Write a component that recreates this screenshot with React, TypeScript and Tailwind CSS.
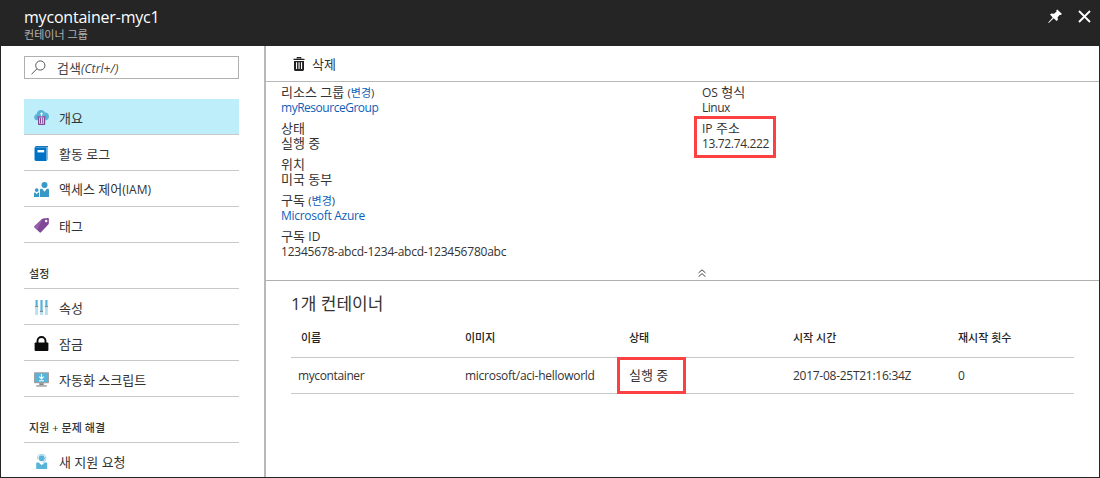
import type { ReactNode } from "react";

const CloudBinIcon = () => (
  <svg width="15" height="15" viewBox="0 0 15 15">
    <path d="M3.2 10.2A3 3 0 0 1 .2 7.2c0-1.500 1-2.600 2.400-2.900C2.900 1.900 4.600.1 6.900.1c1.900 0 3.300 1 3.900 2.500 2.300-.2 4.200 1.500 4.200 3.800 0 2.200-1.500 3.800-3.600 3.800z" fill="#59b4d9" />
    <path d="M4 6.200h7.200v7.600c0 .7-.5 1.200-1.200 1.200H5.200C4.500 15 4 14.500 4 13.800z" fill="#e6dcec" />
    <path d="M3.500 7.400V6.300h8.200v1.100zM4 7.400h1.200v6.400H10V7.400h1.200V14c0 .6-.4 1-1 1H5c-.6 0-1-.4-1-1zM6 8h1v5.200H6zM8.200 8h1v5.200h-1z" fill="#804998" />
    <path d="M7.600 2.200 9.400 4.200H8.100v2H7.100v-2H5.800z" fill="#fff" />
  </svg>
);

const BookIcon = () => (
  <svg width="15" height="15" viewBox="0 0 15 15">
    <path d="M2.600 0H14v13.600l-1.400 1V1.800H.8z" fill="#59a4d6" />
    <path d="M.9 1.300C1.200.5 1.800 0 2.600 0H14v.7H3c-.8 0-1.200.4-1.300.9z" fill="#0064b0" />
    <path d="M.5 1.600h12.100V15H2C1 15 .5 14.500.5 13.600z" fill="#0072c6" />
    <path d="M3.500 4h6.700v2.400H3.500z" fill="#fff" />
    <path d="M13.200 1v13" stroke="#d5e8f4" strokeWidth=".5" />
  </svg>
);

const PeopleIcon = () => (
  <svg width="15" height="15" viewBox="0 0 15 15" fill="#3999c6">
    <circle cx="10.500" cy="3" r="3" />
    <circle cx="2.700" cy="8.100" r="1.900" />
    <path d="M6 15V8.200c0-.9.500-1.400 1.300-1.400h.9l2.300 2.900 2.300-2.900h.9c.8 0 1.300.5 1.300 1.400V15zM0 15v-3.300c0-.7.400-1.100 1-1.100h.4l1.300 1.700L4 10.600h1.200V15z" />
  </svg>
);

const TagIcon = () => (
  <svg width="15" height="15" viewBox="0 0 15 15">
    <path fillRule="evenodd" d="M9.100.4 13.900.1c.6 0 1 .4 1 1l-.1 4.300c0 .4-.2.800-.5 1.100L7 14.300c-.5.5-1 .5-1.500 0L.5 9.500c-.5-.5-.5-1 0-1.500L8 .9c.3-.3.7-.5 1.100-.5zm3.100 1.400a1.200 1.200 0 1 0 0 2.400 1.200 1.200 0 0 0 0-2.400z" fill="#804998" />
    <path d="M8.600.5.500 8c-.5.5-.5 1 0 1.500L3.200 12z" fill="#a573b8" opacity=".55" />
  </svg>
);

const SlidersIcon = () => (
  <svg width="15" height="15" viewBox="0 0 15 15">
    <path d="M1.200 6h2.800v9H1.200zM6.100 10h2.800v5H6.100zM11 6h2.800v9H11z" fill="#b7dff0" />
    <path d="M1.500 0h2.200v6H1.500zM6.400 0h2.200v11H6.400zM11.300 0h2.200v6h-2.200z" fill="#59b4d9" />
    <path d="M1 6h3.200v1H1zM5.900 11h3.200v1H5.900zM10.800 6H14v1h-3.200z" fill="#858c90" />
  </svg>
);

const LockIcon = () => (
  <svg width="15" height="15" viewBox="0 0 15 15">
    <path d="M3.500 7V5a4 4 0 0 1 8 0v2" fill="none" stroke="#0a0a0a" strokeWidth="1.900" />
    <rect x=".6" y="6.500" width="13.800" height="8.500" rx="1" fill="#0a0a0a" />
  </svg>
);

const MonitorIcon = () => (
  <svg width="15" height="15" viewBox="0 0 15 15">
    <rect x="0" y=".3" width="15" height="10.900" rx=".6" fill="#a0a1a2" />
    <rect x="1" y="1.300" width="13" height="8.800" fill="#59b4d9" />
    <path d="M5.300 11.200h4.400v2H5.300z" fill="#858688" />
    <path d="M2.200 13.200h10.600v1.500H2.200z" fill="#a0a1a2" />
    <path d="M7.500 2v4.700M5.300 4.700l2.200 2.200 2.200-2.200M5 8.700h5" fill="none" stroke="#fff" strokeWidth="1.100" />
  </svg>
);

const SupportIcon = () => (
  <svg width="15" height="15" viewBox="0 0 15 15">
    <circle cx="7.700" cy="4.300" r="3" fill="#59b4d9" />
    <path d="M3.600 5.400V4.300a4.100 4.100 0 0 1 8.200 0c0 2.300-1 3.700-3 4" fill="none" stroke="#8ccbe4" strokeWidth=".9" />
    <path d="M2.200 15V9.800c0-.9.400-1.400 1.200-1.400h1.300l3 2.900 3-2.900H12c.8 0 1.200.5 1.200 1.400V15z" fill="#59b4d9" />
  </svg>
);

const TrashIcon = () => (
  <svg width="12" height="14" viewBox="0 0 12 14">
    <path d="M4.300 1.600V.6h3.400v1M.5 2.300h11" fill="none" stroke="#222" strokeWidth="1.200" />
    <path fillRule="evenodd" d="M1 4h10v8.600c0 .8-.5 1.400-1.300 1.400H2.300C1.500 14 1 13.400 1 12.600zM3 5.200v6.900h1.100V5.200zm2.500 0v6.900h1.100V5.200zm2.500 0v6.900h1.100V5.200z" fill="#222" />
  </svg>
);

const PinIcon = () => (
  <svg width="15" height="15" viewBox="0 0 15 15" fill="#fff">
    <path d="M9.300.4 14 5.100l-1.300 1-.8-.3-2.300 2.400.3 2.500-1.300 1.300-2.900-2.800L.8 13.900l-.6-.5 4.500-5L2 5.600l1.400-1.100 2.600.3 2.600-2.300-.4-.9z" />
  </svg>
);

const NavRow = ({ icon, active, children }: { icon: ReactNode; active?: boolean; children: ReactNode }) => (
  <div className={`flex h-9 shrink-0 items-center gap-[10px] border-b border-[#c8c8c8] pt-[2px] pl-[10px] ${active ? "bg-[#bdeefa]" : ""}`}>
    {icon}
    <span className="text-[13px] leading-4 whitespace-nowrap">{children}</span>
  </div>
);

const Heading = ({ children }: { children: ReactNode }) => (
  <div className="h-[46px] shrink-0 border-b border-[#c8c8c8] pt-[23px] pl-[5px] text-[11px] leading-4 font-medium tracking-[0.05px] text-[#333]">{children}</div>
);

const Pair = ({ label, children }: { label: ReactNode; children: ReactNode }) => (
  <div className="h-9 text-[13px] leading-[15px] whitespace-nowrap">
    <div className="h-[15px]">{label}</div>
    <div className="h-[15px]">{children}</div>
  </div>
);

const Change = () => (
  <span className="text-[11px]">
    (<a className="text-[#0f5fb8]">변경</a>)
  </span>
);

export default function App() {
  return (
    <div className="flex h-[478px] w-[1100px] flex-col overflow-hidden bg-[#252525] font-['Open_Sans','Noto_Sans_CJK_KR',sans-serif] text-[#333]">
      <header className="flex h-[46px] shrink-0 justify-between pr-[9px] pl-6">
        <div>
          <h1 className="pt-[6px] text-[16px] leading-[22px] tracking-[-0.2px] text-white">mycontainer-myc1</h1>
          <p className="text-[11px] leading-[14px] tracking-[0.05px] text-[#b4b4b4]">컨테이너 그룹</p>
        </div>
        <div className="flex gap-4 pt-[9px]">
          <PinIcon />
          <svg width="13" height="13" viewBox="0 0 13 13" className="mt-px -ml-px">
            <path d="m1 1 11 11M12 1 1 12" stroke="#fff" strokeWidth="1.800" />
          </svg>
        </div>
      </header>
      <div className="mx-px mb-px flex min-h-0 flex-1 bg-white">
        <nav className="flex w-[265px] shrink-0 flex-col overflow-hidden border-r-2 border-[#b8b8b8] pt-[10px] pr-[25px] pl-[23px]">
          <div className="mb-[20px] flex h-[23px] shrink-0 items-center border border-[#b0b0b0] pl-[6px]">
            <svg width="15" height="15" viewBox="0 0 15 15" fill="none" stroke="#555" strokeWidth="1">
              <circle cx="9.300" cy="5.500" r="4.600" />
              <path d="M6 8.800.5 14.200" />
            </svg>
            <span className="ml-[11px] pt-px text-[13px] leading-4 text-[#444]">
              검색<i className="text-[12px] tracking-[0.1px]">(Ctrl+/)</i>
            </span>
          </div>
          <NavRow active icon={<CloudBinIcon />}>개요</NavRow>
          <NavRow icon={<BookIcon />}>활동 로그</NavRow>
          <NavRow icon={<PeopleIcon />}>액세스 제어<span className="text-[12px]">(IAM)</span></NavRow>
          <NavRow icon={<TagIcon />}>태그</NavRow>
          <Heading>설정</Heading>
          <NavRow icon={<SlidersIcon />}>속성</NavRow>
          <NavRow icon={<LockIcon />}>잠금</NavRow>
          <NavRow icon={<MonitorIcon />}>자동화 스크립트</NavRow>
          <Heading>지원 + 문제 해결</Heading>
          <NavRow icon={<SupportIcon />}>새 지원 요청</NavRow>
        </nav>
        <main className="flex min-w-0 flex-1 flex-col">
          <div className="flex h-9 shrink-0 items-center gap-[7px] border-b border-[#b8b8b8] pl-[27px] text-[13px]">
            <TrashIcon />
            <span className="pt-[2px]">삭제</span>
          </div>
          <section className="flex h-[183px] shrink-0 pt-[3px] pl-[15px]">
            <div className="w-[421px]">
              <Pair label={<>리소스 그룹 <Change /></>}><a className="text-[12px] tracking-[-0.48px] text-[#0f5fb8]">myResourceGroup</a></Pair>
              <Pair label="상태">실행 중</Pair>
              <Pair label="위치">미국 동부</Pair>
              <Pair label={<>구독 <Change /></>}><a className="text-[12px] tracking-[-0.28px] text-[#0f5fb8]">Microsoft Azure</a></Pair>
              <Pair label={<>구독 <span className="text-[12px]">ID</span></>}><span className="text-[12px] tracking-[-0.23px]">12345678-abcd-1234-abcd-123456780abc</span></Pair>
            </div>
            <div>
              <Pair label={<><span className="text-[12px]">OS</span> 형식</>}><span className="text-[12px] tracking-[-0.5px]">Linux</span></Pair>
              <div className="-mt-[5px] -ml-[8px] h-[42px] w-[82px] border-[3px] border-[#fb4141] pt-[2px] pl-[5px]">
                <Pair label={<><span className="text-[12px]">IP</span> 주소</>}><span className="text-[12px] tracking-[-0.35px]">13.72.74.222</span></Pair>
              </div>
            </div>
          </section>
          <div className="flex h-4 shrink-0 justify-center border-b border-[#b0b0b0] pt-[4px] pl-[38px]">
            <svg width="8" height="8" viewBox="0 0 8 8" fill="none" stroke="#444" strokeWidth="1">
              <path d="M.5 4 4 .8 7.500 4M.5 7.800 4 4.600l3.500 3.200" />
            </svg>
          </div>
          <section className="pr-[25px] pl-[25px]">
            <h2 className="pt-[11px] text-[17px] leading-6">1개 컨테이너</h2>
            <div className="grid h-[42px] grid-cols-[164px_164px_164px_165px_1fr] items-center border-b border-[#c8c8c8] pt-[3px] pl-[10px] text-[11px] font-medium text-[#222]">
              <span>이름</span><span>이미지</span><span>상태</span><span>시작 시간</span><span>재시작 횟수</span>
            </div>
            <div className="grid h-9 grid-cols-[167px_164px_164px_165px_1fr] items-center border-b border-[#c8c8c8] pl-[7px] text-[12px] tracking-[-0.27px]">
              <span className="tracking-[-0.38px]">mycontainer</span>
              <span>microsoft/aci-helloworld</span>
              <span className="-my-px -ml-3 flex h-[37px] w-[69px] items-center border-[3px] border-[#fb4141] pl-[9px] text-[13px] tracking-normal">실행 중</span>
              <span>2017-08-25T21:16:34Z</span>
              <span>0</span>
            </div>
          </section>
        </main>
      </div>
    </div>
  );
}
